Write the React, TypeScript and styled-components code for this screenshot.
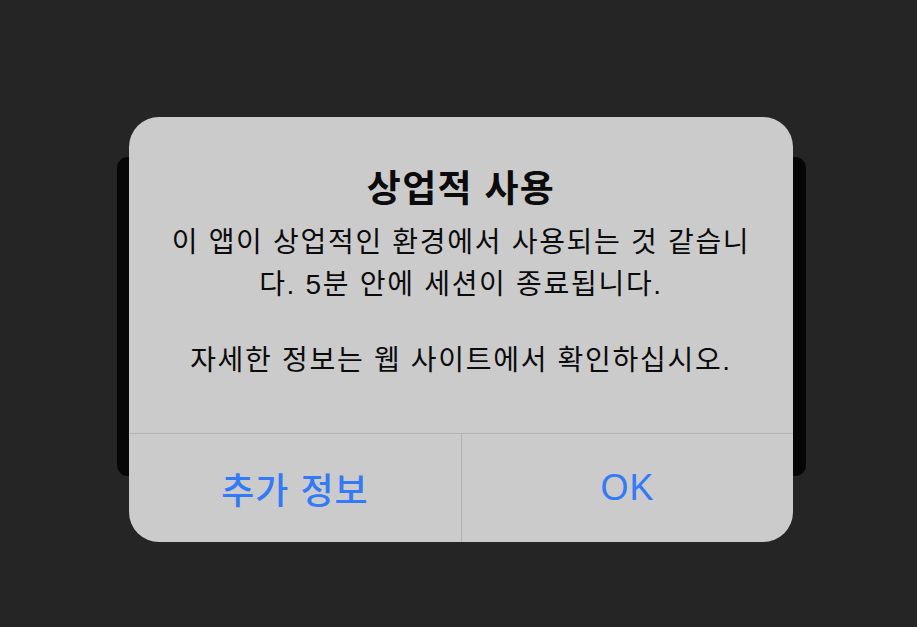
import styled, { createGlobalStyle } from "styled-components";

const GlobalStyle = createGlobalStyle`
  html, body {
    margin: 0;
    padding: 0;
    background: #252525;
  }
  body {
    font-family: "Liberation Sans", "Noto Sans CJK KR", sans-serif;
  }
`;

const Page = styled.div`
  width: 917px;
  height: 627px;
  padding: 117px 0 0 129px;
  box-sizing: border-box;
  overflow: hidden;
`;

const Stage = styled.div`
  position: relative;
  width: 664px;
`;

// the dark sheet that peeks out behind the alert
const Backdrop = styled.div`
  position: absolute;
  left: -12px;
  right: -13px;
  top: 40px;
  bottom: 66px;
  background: #060606;
  border-radius: 11px;
`;

const Alert = styled.div`
  position: relative;
  background: #cbcbcb;
  border-radius: 30px;
  overflow: hidden;
  display: flex;
  flex-direction: column;
`;

const Content = styled.div`
  height: 316px;
  box-sizing: border-box;
  padding: 51px 10px 0;
  display: flex;
  flex-direction: column;
  align-items: center;
  text-align: center;
  color: #0b0b0b;
  white-space: nowrap;
`;

const Title = styled.h1`
  margin: 0 0 10px;
  font-size: 37px;
  line-height: 44px;
  font-weight: 700;
  letter-spacing: 1.3px;
`;

const Message = styled.p<{ $gap?: number }>`
  margin: ${(p) => p.$gap ?? 0}px 0 0;
  font-size: 28px;
  line-height: 42px;
  font-weight: 400;
  letter-spacing: 1.7px;
`;

const Actions = styled.div`
  height: 108px;
  display: grid;
  grid-template-columns: 1fr 1fr;
  border-top: 1px solid #b3b3b3;
`;

const ActionButton = styled.button`
  border: none;
  background: none;
  color: #3479f6;
  font-family: inherit;
  font-size: 36px;
  font-weight: 500;
  letter-spacing: 1px;
  padding: 0;
  cursor: pointer;
  & + & {
    border-left: 1px solid #b3b3b3;
  }
`;

export default function App() {
  return (
    <>
      <GlobalStyle />
      <Page>
        <Stage>
          <Backdrop />
          <Alert>
            <Content>
              <Title>상업적 사용</Title>
              <Message>
                이 앱이 상업적인 환경에서 사용되는 것 같습니
                <br />
                다. 5분 안에 세션이 종료됩니다.
              </Message>
              <Message $gap={34}>자세한 정보는 웹 사이트에서 확인하십시오.</Message>
            </Content>
            <Actions>
              <ActionButton>추가 정보</ActionButton>
              <ActionButton>OK</ActionButton>
            </Actions>
          </Alert>
        </Stage>
      </Page>
    </>
  );
}
